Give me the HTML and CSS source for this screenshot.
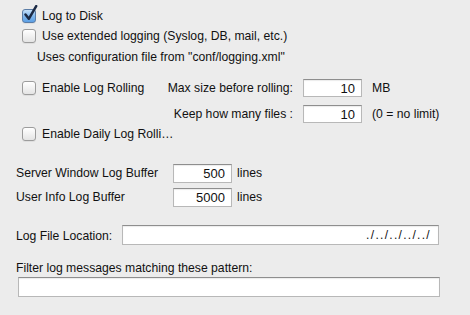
FILE: index.html
```html
<!DOCTYPE html>
<html lang="en">
<head>
    <meta charset="UTF-8">
    <title>Logging Settings</title>
    <link rel="stylesheet" href="styles.css">
</head>
<body>
    <div class="pane">
        <label class="check-row">
            <span class="box on">
                <svg class="tick" width="15" height="17" viewBox="0 0 15 17">
                    <path d="M2.5 9.5 L5.8 13.8 L13.2 1.2" fill="none" stroke="#1b2a45" stroke-width="2.5" stroke-linecap="round" stroke-linejoin="round"/>
                </svg>
            </span>
            Log to Disk
        </label>
        <label class="check-row">
            <span class="box"></span>
            Use extended logging (Syslog, DB, mail, etc.)
        </label>
        <p class="note">Uses configuration file from "conf/logging.xml"</p>

        <div class="rolling">
            <label class="check-row">
                <span class="box"></span>
                Enable Log Rolling
            </label>
            <span class="field-label">Max size before rolling:</span>
            <input class="field num" type="text" value="10">
            <span class="unit">MB</span>

            <span class="field-label second">Keep how many files :</span>
            <input class="field num" type="text" value="10">
            <span class="unit">(0 = no limit)</span>

            <label class="check-row daily">
                <span class="box"></span>
                Enable Daily Log Rolli…
            </label>
        </div>

        <div class="buffers">
            <span class="buf-label">Server Window Log Buffer</span>
            <input class="field num buf" type="text" value="500">
            <span class="buf-unit">lines</span>

            <span class="buf-label">User Info Log Buffer</span>
            <input class="field num buf" type="text" value="5000">
            <span class="buf-unit">lines</span>
        </div>

        <div class="location">
            <span class="loc-label">Log File Location:</span>
            <input class="field loc" type="text" value="./../../../../">
        </div>

        <div class="filter-label">Filter log messages matching these pattern:</div>
        <input class="field filter" type="text" value="">
    </div>
</body>
</html>
```

FILE: styles.css
```css
* {
    margin: 0;
    padding: 0;
    box-sizing: border-box;
}

body {
    background: #ececec;
    color: #111;
    font-family: 'Liberation Sans', Arial, sans-serif;
    font-size: 12.2px;
}

.pane {
    padding: 6px 0 0 16px;
}

.check-row {
    display: flex;
    align-items: center;
    gap: 6px;
    height: 20px;
    line-height: 20px;
    margin-left: 6px;
    white-space: nowrap;
}

.box {
    position: relative;
    flex: none;
    width: 14px;
    height: 14px;
    border: 1px solid #9c9c9c;
    border-radius: 3px;
    background: linear-gradient(#ffffff, #e4e4e4);
    box-shadow: 0 1px 0 rgba(0, 0, 0, 0.06);
}

.box.on {
    border-color: #5a7ca6;
    background: linear-gradient(#c4e0fa, #7db5ec 55%, #5c9fe4);
}

.tick {
    position: absolute;
    left: 0;
    top: -5px;
}

.note {
    margin: 1px 0 0 21px;
    line-height: 20px;
}

.rolling {
    display: grid;
    grid-template-columns: 141px 126px 59px auto;
    grid-template-rows: 20px 26px 20px;
    column-gap: 10px;
    align-items: end;
    margin-top: 11px;
}

.field-label {
    justify-self: end;
    line-height: 20px;
    white-space: nowrap;
}

.field-label.second {
    grid-column: 2;
}

.unit,
.buf-unit {
    line-height: 20px;
    white-space: nowrap;
}

.daily {
    grid-column: 1 / span 2;
}

.field {
    height: 18px;
    border: 1px solid #b8b8b8;
    border-top-color: #8e8e8e;
    background: #fff;
    box-shadow: inset 0 1px 1px rgba(0, 0, 0, 0.08);
    font-family: 'Liberation Sans', Arial, sans-serif;
    font-size: 13px;
    color: #111;
    padding: 0 6px;
    outline: none;
}

.num {
    width: 59px;
    text-align: right;
    margin-bottom: 1px;
}

.buffers {
    display: grid;
    grid-template-columns: 157px 59px auto;
    grid-auto-rows: 22px;
    row-gap: 2px;
    align-items: center;
    margin-top: 18px;
}

.buf {
    height: 19px;
    margin-bottom: 0;
}

.buf-unit {
    margin-left: 5px;
}

.location {
    display: flex;
    align-items: center;
    height: 22px;
    margin-top: 16px;
}

.loc-label {
    width: 106px;
    padding-top: 1px;
}

.loc {
    width: 317px;
    height: 20px;
    text-align: right;
    padding-right: 7px;
    font-size: 12px;
    letter-spacing: 1.3px;
}

.filter-label {
    margin-top: 15px;
    line-height: 15px;
}

.filter {
    display: block;
    width: 422px;
    height: 20px;
    margin: 1px 0 0 2px;
}
```
